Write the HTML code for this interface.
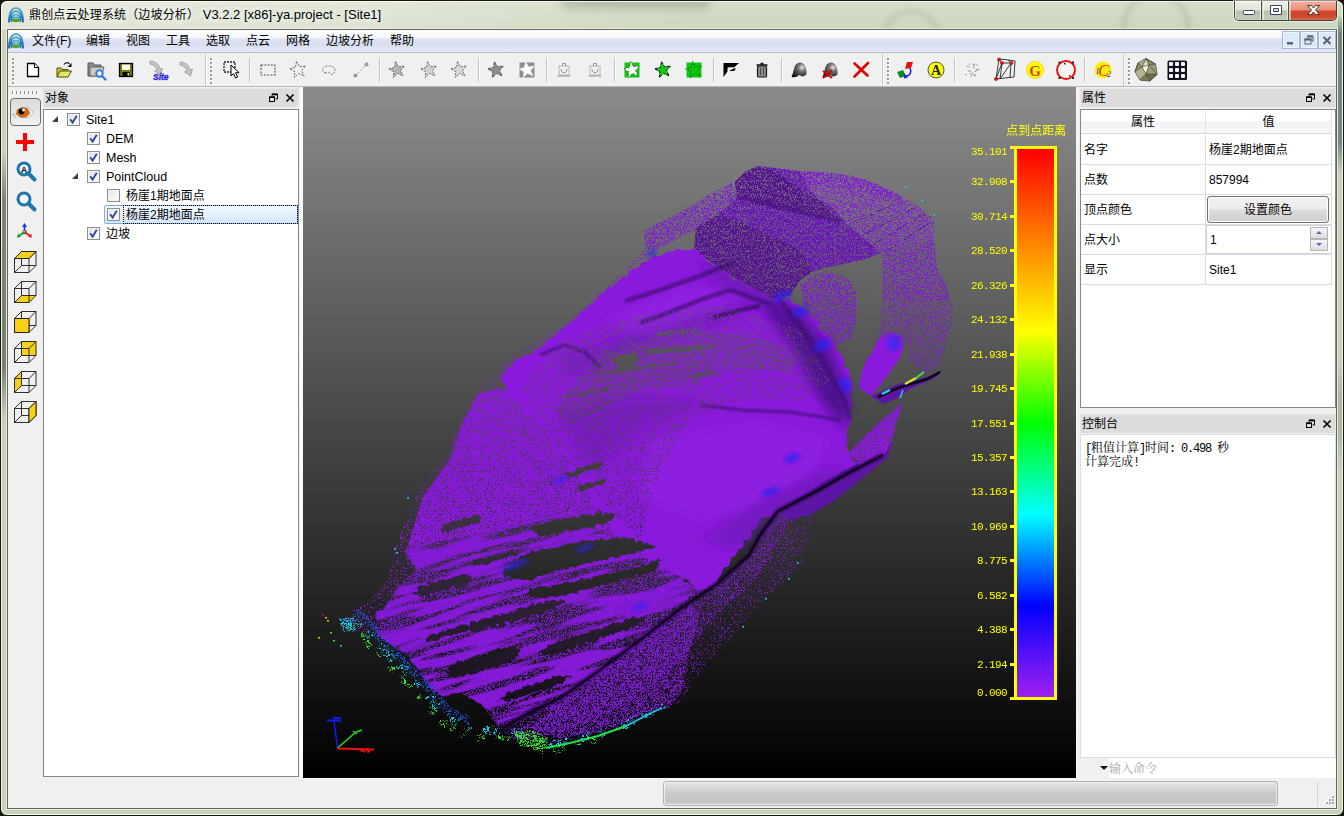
<!DOCTYPE html>
<html lang="zh-CN">
<head>
<meta charset="utf-8">
<title>鼎创点云处理系统（边坡分析） V3.2.2 [x86]-ya.project - [Site1]</title>
<style>
*{box-sizing:border-box;margin:0;padding:0}
html,body{width:1344px;height:816px;overflow:hidden;background:#14150f}
body{font-family:"Liberation Sans","Noto Sans CJK SC",sans-serif;font-size:12px;color:#000;position:relative}
.abs{position:absolute}
#frame{position:absolute;left:0;top:0;width:1344px;height:816px;background:linear-gradient(#d6ddc8 0,#d1dac2 14px,#ccd5bd 30px,#c8d3ba 60px,#c8d3ba 100%);border:1px solid #14150f;border-radius:7px 7px 7px 7px;overflow:hidden}
#frame .hl{position:absolute;left:0;top:0;right:0;bottom:0;border:1px solid rgba(250,253,244,.85);border-radius:6px}
#client{position:absolute;left:7px;top:29px;width:1330px;height:780px;border:1px solid #62665c;background:#f0f0f0;box-shadow:0 0 0 1px rgba(240,243,234,.8)}
#title{position:absolute;left:29px;top:6px;font-size:12px;line-height:17px;white-space:nowrap;color:#000;text-shadow:0 0 6px rgba(255,255,255,.9),0 0 10px rgba(255,255,255,.8),0 0 14px rgba(255,255,255,.6)}
/* menubar */
#menubar{position:absolute;left:8px;top:30px;width:1328px;height:23px;background:linear-gradient(#ffffff 0,#f3f5fb 35%,#dfe3f2 42%,#d9def0 60%,#e3e7f6 100%);border-bottom:1px solid #b6bccc}
#menubar span{position:absolute;top:3px;line-height:16px;font-size:12px;white-space:nowrap}
/* toolbar */
#toolbar{position:absolute;left:8px;top:53px;width:1328px;height:34px;background:#f0f0f0;border-bottom:1px solid #b9b9b9}
.grip{position:absolute;width:3px;background-image:repeating-linear-gradient(#8f8f8f 0 1px,#fff 1px 2px,transparent 2px 4px)}
.vsep{position:absolute;width:1px;background:#c9c9c9;box-shadow:1px 0 0 #fff}
.dtitle{position:absolute;height:19px;background:#dcdcdc;border:1px solid #e6e6e6;border-width:1px 1px 0 1px;font-size:12px;line-height:19px;padding-left:1px;white-space:nowrap}
.box{position:absolute;background:#fff;border:1px solid #828790}

/* left bar */
#leftbar{position:absolute;left:8px;top:87px;width:35px;height:692px;background:#f0f0f0}
.hgrip{position:absolute;height:3px;background-image:repeating-linear-gradient(90deg,#8f8f8f 0 1px,#fff 1px 2px,transparent 2px 4px)}
#eyebtn{position:absolute;left:2px;top:11px;width:31px;height:28px;border:1px solid #6b6b6b;border-radius:4px;background:linear-gradient(#dadada,#f2f2f2)}
/* tree */
.cb{position:absolute;width:13px;height:13px;border:1px solid #8e8f8f;background:linear-gradient(135deg,#d7dbe0 0%,#f4f5f7 55%,#fdfdfd 100%);box-shadow:inset 0 0 0 1px #f4f4f4}
.cb svg{position:absolute;left:1px;top:1px}
.tl{position:absolute;font-size:12px;line-height:17px;white-space:nowrap;margin-top:2px}
.tl.la{font-size:12.5px}
.exp{position:absolute;width:0;height:0;border-left:6px solid transparent;border-bottom:6px solid #404040}
/* right */
.prow{position:absolute;left:0;width:250px;height:30px;border-bottom:1px solid #dcdcdc}
.prow span{position:absolute;top:7px;font-size:12px;line-height:16px;white-space:nowrap}

#vp{position:absolute;left:303px;top:87px;width:773px;height:691px;background:linear-gradient(#8b8b8b,#000);overflow:hidden}
#vpb{position:absolute;left:300px;top:87px;width:777px;height:692px;background:#fbfbfb}
.cl{position:absolute;left:940px;width:67px;text-align:right;color:#ff0;font-family:"Liberation Mono",monospace;font-size:11px;line-height:12px;letter-spacing:-0.6px;white-space:pre}
.tk{position:absolute;left:1010px;width:4px;height:3px;background:#ff0}
.m{letter-spacing:-1.2px}
</style>
</head>
<body>
<div id="frame"><div class="abs" style="left:0;top:0;width:700px;height:29px;background:linear-gradient(90deg,rgba(255,255,255,.38) 0,rgba(255,255,255,.3) 55%,rgba(255,255,255,0) 100%)"></div><div class="abs" style="left:560px;top:-6px;width:150px;height:14px;border-radius:7px;background:rgba(90,100,80,.28);filter:blur(4px)"></div><div class="abs" style="left:880px;top:8px;width:60px;height:60px;border-radius:30px;border:5px solid rgba(120,135,105,.18);filter:blur(2px)"></div><div class="abs" style="left:1120px;top:-10px;width:70px;height:70px;border-radius:35px;border:6px solid rgba(120,135,105,.18);filter:blur(2px)"></div><div class="hl"></div></div>
<div id="title"><span style="letter-spacing:.15px">鼎创点云处理系统（边坡分析）</span><span style="font-size:13px"> V3.2.2 [x86]-ya.project - [Site1]</span></div>
<!--STRIPES--><div class="abs" style="left:2px;top:150px;width:4px;height:270px;background:linear-gradient(rgba(96,108,92,0) 0,rgba(96,108,92,.75) 18%,rgba(96,108,92,.8) 80%,rgba(96,108,92,0) 100%)"></div>
<div class="abs" style="left:1338px;top:14px;width:4px;height:160px;background:linear-gradient(rgba(96,118,116,0) 0,rgba(96,118,116,.85) 12%,rgba(96,118,116,.8) 80%,rgba(96,118,116,0) 100%)"></div>
<div class="abs" style="left:1338px;top:360px;width:4px;height:110px;background:linear-gradient(rgba(96,108,92,0) 0,rgba(96,108,92,.25) 30%,rgba(96,108,92,.25) 70%,rgba(96,108,92,0) 100%)"></div>
<!--/STRIPES--><div id="client"></div>
<div id="menubar">
<span style="left:24px">文件(F)</span><span style="left:78px">编辑</span><span style="left:118px">视图</span><span style="left:158px">工具</span><span style="left:198px">选取</span><span style="left:238px">点云</span><span style="left:278px">网格</span><span style="left:318px">边坡分析</span><span style="left:382px">帮助</span>
</div>
<div id="toolbar"></div><!--TB--><svg class="abs" style="left:8px;top:53px" width="1328" height="34" viewBox="8 53 1328 34"><rect x="205" y="54" width="1" height="32" fill="#c9c9c9"/><rect x="206" y="54" width="1" height="32" fill="#fdfdfd"/><rect x="882" y="54" width="1" height="32" fill="#c9c9c9"/><rect x="883" y="54" width="1" height="32" fill="#fdfdfd"/><rect x="1123" y="54" width="1" height="32" fill="#c9c9c9"/><rect x="1124" y="54" width="1" height="32" fill="#fdfdfd"/><rect x="13" y="59" width="2" height="2" fill="#fff"/><rect x="12" y="58" width="2" height="2" fill="#9a9a9a"/><rect x="13" y="63" width="2" height="2" fill="#fff"/><rect x="12" y="62" width="2" height="2" fill="#9a9a9a"/><rect x="13" y="67" width="2" height="2" fill="#fff"/><rect x="12" y="66" width="2" height="2" fill="#9a9a9a"/><rect x="13" y="71" width="2" height="2" fill="#fff"/><rect x="12" y="70" width="2" height="2" fill="#9a9a9a"/><rect x="13" y="75" width="2" height="2" fill="#fff"/><rect x="12" y="74" width="2" height="2" fill="#9a9a9a"/><rect x="13" y="79" width="2" height="2" fill="#fff"/><rect x="12" y="78" width="2" height="2" fill="#9a9a9a"/><rect x="13" y="83" width="2" height="2" fill="#fff"/><rect x="12" y="82" width="2" height="2" fill="#9a9a9a"/><rect x="211" y="59" width="2" height="2" fill="#fff"/><rect x="210" y="58" width="2" height="2" fill="#9a9a9a"/><rect x="211" y="63" width="2" height="2" fill="#fff"/><rect x="210" y="62" width="2" height="2" fill="#9a9a9a"/><rect x="211" y="67" width="2" height="2" fill="#fff"/><rect x="210" y="66" width="2" height="2" fill="#9a9a9a"/><rect x="211" y="71" width="2" height="2" fill="#fff"/><rect x="210" y="70" width="2" height="2" fill="#9a9a9a"/><rect x="211" y="75" width="2" height="2" fill="#fff"/><rect x="210" y="74" width="2" height="2" fill="#9a9a9a"/><rect x="211" y="79" width="2" height="2" fill="#fff"/><rect x="210" y="78" width="2" height="2" fill="#9a9a9a"/><rect x="211" y="83" width="2" height="2" fill="#fff"/><rect x="210" y="82" width="2" height="2" fill="#9a9a9a"/><rect x="888" y="59" width="2" height="2" fill="#fff"/><rect x="887" y="58" width="2" height="2" fill="#9a9a9a"/><rect x="888" y="63" width="2" height="2" fill="#fff"/><rect x="887" y="62" width="2" height="2" fill="#9a9a9a"/><rect x="888" y="67" width="2" height="2" fill="#fff"/><rect x="887" y="66" width="2" height="2" fill="#9a9a9a"/><rect x="888" y="71" width="2" height="2" fill="#fff"/><rect x="887" y="70" width="2" height="2" fill="#9a9a9a"/><rect x="888" y="75" width="2" height="2" fill="#fff"/><rect x="887" y="74" width="2" height="2" fill="#9a9a9a"/><rect x="888" y="79" width="2" height="2" fill="#fff"/><rect x="887" y="78" width="2" height="2" fill="#9a9a9a"/><rect x="888" y="83" width="2" height="2" fill="#fff"/><rect x="887" y="82" width="2" height="2" fill="#9a9a9a"/><rect x="1129" y="59" width="2" height="2" fill="#fff"/><rect x="1128" y="58" width="2" height="2" fill="#9a9a9a"/><rect x="1129" y="63" width="2" height="2" fill="#fff"/><rect x="1128" y="62" width="2" height="2" fill="#9a9a9a"/><rect x="1129" y="67" width="2" height="2" fill="#fff"/><rect x="1128" y="66" width="2" height="2" fill="#9a9a9a"/><rect x="1129" y="71" width="2" height="2" fill="#fff"/><rect x="1128" y="70" width="2" height="2" fill="#9a9a9a"/><rect x="1129" y="75" width="2" height="2" fill="#fff"/><rect x="1128" y="74" width="2" height="2" fill="#9a9a9a"/><rect x="1129" y="79" width="2" height="2" fill="#fff"/><rect x="1128" y="78" width="2" height="2" fill="#9a9a9a"/><rect x="1129" y="83" width="2" height="2" fill="#fff"/><rect x="1128" y="82" width="2" height="2" fill="#9a9a9a"/><rect x="249" y="58" width="1" height="24" fill="#c4c4c4"/><rect x="250" y="58" width="1" height="24" fill="#fbfbfb"/><rect x="379" y="58" width="1" height="24" fill="#c4c4c4"/><rect x="380" y="58" width="1" height="24" fill="#fbfbfb"/><rect x="478" y="58" width="1" height="24" fill="#c4c4c4"/><rect x="479" y="58" width="1" height="24" fill="#fbfbfb"/><rect x="546" y="58" width="1" height="24" fill="#c4c4c4"/><rect x="547" y="58" width="1" height="24" fill="#fbfbfb"/><rect x="614" y="58" width="1" height="24" fill="#c4c4c4"/><rect x="615" y="58" width="1" height="24" fill="#fbfbfb"/><rect x="713" y="58" width="1" height="24" fill="#c4c4c4"/><rect x="714" y="58" width="1" height="24" fill="#fbfbfb"/><rect x="781" y="58" width="1" height="24" fill="#c4c4c4"/><rect x="782" y="58" width="1" height="24" fill="#fbfbfb"/><rect x="954" y="58" width="1" height="24" fill="#c4c4c4"/><rect x="955" y="58" width="1" height="24" fill="#fbfbfb"/><rect x="1084" y="58" width="1" height="24" fill="#c4c4c4"/><rect x="1085" y="58" width="1" height="24" fill="#fbfbfb"/><g transform="translate(33 70)"><path d="M-5.5 -6.5h7l4 4v9h-11z" fill="#fff" stroke="#000" stroke-width="1.3"/><path d="M1.5 -6.5v4h4" fill="#fff" stroke="#000" stroke-width="1"/></g><g transform="translate(64 70)"><path d="M-7 7v-9h4l1 1.5h6v2" fill="#caca4a" stroke="#4d4d00" stroke-width="1"/><path d="M-7 7l3-6h11.5l-3.5 6z" fill="#e6e66a" stroke="#4d4d00" stroke-width="1"/><path d="M0 -5.5c1.5-2 4-2.5 5.5-0.5" fill="none" stroke="#000" stroke-width="1.2"/><path d="M7.5 -7v4h-4z" fill="#000"/></g><g transform="translate(96 70)"><path d="M-8 6v-13h5l1.5 2h6.5v11z" fill="#8a8a8a" stroke="#555" stroke-width="1"/><path d="M-6 6v-9h12l2 0l-2.5 9z" fill="#c9c9c9" stroke="#666" stroke-width="1"/><circle cx="3.5" cy="3.5" r="3.2" fill="#fff" stroke="#2f7de1" stroke-width="2"/><path d="M6 6l3.5 3.5" stroke="#2f7de1" stroke-width="2.4" stroke-linecap="round"/></g><g transform="translate(126 70)"><rect x="-6.5" y="-6.5" width="13" height="13" fill="#77770a" stroke="#000" stroke-width="1.3"/><rect x="-4" y="-5.5" width="8" height="5.5" fill="#f4f4f4"/><rect x="-3.5" y="2" width="7" height="4.5" fill="#000"/><rect x="1.5" y="3" width="1.5" height="2.5" fill="#ddd"/></g><g transform="translate(157 70)"><g transform="translate(0 -1)"><path d="M-7 -8c5 0 9 3 10 8l2.5-1l-2 7l-6-4l2.5-1c-1-3-3-5-7-6z" fill="#c4c4c4" stroke="#9a9a9a" stroke-width=".8"/></g><text x="-4" y="10" font-family="Liberation Sans,sans-serif" font-size="8.5" font-weight="bold" font-style="italic" fill="#2a1fd6" stroke="#2a1fd6" stroke-width=".4">Site</text></g><g transform="translate(187 70)"><path d="M-7 -8c5 0 9 3 10 8l2.5-1l-2 7l-6-4l2.5-1c-1-3-3-5-7-6z" fill="#c4c4c4" stroke="#9a9a9a" stroke-width=".8"/></g><g transform="translate(231 70)"><rect x="-7" y="-8" width="11" height="10" fill="none" stroke="#222" stroke-width="1.3" stroke-dasharray="2 1"/><path d="M0 -5v11l2.6-2.5l2 4.5l2-1l-2-4.3h3.5z" fill="#fff" stroke="#000" stroke-width="1"/></g><g transform="translate(268 70)"><rect x="-7" y="-5" width="14" height="10" fill="none" stroke="#555" stroke-width="1.1" stroke-dasharray="2 1.3"/></g><g transform="translate(298 70)"><polygon points="-1.5,-8.4 1.6,-3.2 7.5,-4.0 3.6,0.5 6.1,5.9 0.6,3.5 -3.7,7.6 -3.2,1.7 -8.4,-1.2 -2.6,-2.5" fill="none" stroke="#666" stroke-width="1" stroke-dasharray="2 1.2"/></g><g transform="translate(329 70)"><path d="M-3 3c-4-0.5-5-5-1-6.5c4-1.5 10 0 10 3.5c0 3-2 4.5-4 4.5c-1-2.5-3-2.5-5-1.5z" fill="none" stroke="#777" stroke-width="1" stroke-dasharray="2 1.3"/></g><g transform="translate(361 70)"><path d="M-5.5 5.5L5.5-5.5" stroke="#999" stroke-width="1" stroke-dasharray="2 1.5"/><circle cx="-5.5" cy="5.5" r="2" fill="#999"/><circle cx="5.5" cy="-5.5" r="2" fill="#999"/></g><g transform="translate(397 70)"><polygon points="-1.5,-8.4 1.6,-3.2 7.5,-4.0 3.6,0.5 6.1,5.9 0.6,3.5 -3.7,7.6 -3.2,1.7 -8.4,-1.2 -2.6,-2.5" fill="#b4b4b4" stroke="#6e6e6e" stroke-width="1" stroke-dasharray="2 1.2"/></g><g transform="translate(429 70)"><polygon points="-1.5,-8.4 1.6,-3.2 7.5,-4.0 3.6,0.5 6.1,5.9 0.6,3.5 -3.7,7.6 -3.2,1.7 -8.4,-1.2 -2.6,-2.5" fill="#d2d2d2" stroke="#6e6e6e" stroke-width="1" stroke-dasharray="2 1.2"/></g><g transform="translate(459 70)"><polygon points="-1.5,-8.4 1.6,-3.2 7.5,-4.0 3.6,0.5 6.1,5.9 0.6,3.5 -3.7,7.6 -3.2,1.7 -8.4,-1.2 -2.6,-2.5" fill="#d6d6d6" stroke="#6e6e6e" stroke-width="1" stroke-dasharray="2 1.2"/></g><g transform="translate(496 70)"><polygon points="-1.5,-8.4 1.6,-3.2 7.5,-4.0 3.6,0.5 6.1,5.9 0.6,3.5 -3.7,7.6 -3.2,1.7 -8.4,-1.2 -2.6,-2.5" fill="#8d8d8d" stroke="#5c5c5c" stroke-width="1" stroke-dasharray="3 1"/></g><g transform="translate(527 70)"><rect x="-7.5" y="-7.5" width="15" height="15" fill="#8d8d8d"/><polygon points="-1.5,-8.5 1.6,-3.2 7.6,-4.0 3.6,0.5 6.2,6.0 0.6,3.5 -3.8,7.7 -3.2,1.7 -8.5,-1.2 -2.6,-2.5" fill="#fff" stroke="#ddd" stroke-width=".6"/></g><g transform="translate(564 70)"><g fill="none" stroke="#8a8a8a" stroke-width=".9"><rect x="-5" y="-4" width="10" height="9" stroke-dasharray="1.5 1"/><path d="M-6.5 6h13M-1.5 -4v-2.5h3v2.5M-3 -1c0 5 6 5 6 0"/></g></g><g transform="translate(595 70)"><g fill="none" stroke="#8a8a8a" stroke-width=".9"><rect x="-5" y="-4" width="10" height="9" stroke-dasharray="1.5 1"/><path d="M-6.5 6h13M-1.5 -4v-2.5h3v2.5M-3 -1c0 5 6 5 6 0"/></g></g><g transform="translate(632 70)"><rect x="-7.5" y="-7.5" width="15" height="15" fill="#0fc60f"/><polygon points="-1.5,-8.5 1.6,-3.2 7.6,-4.0 3.6,0.5 6.2,6.0 0.6,3.5 -3.8,7.7 -3.2,1.7 -8.5,-1.2 -2.6,-2.5" fill="#fff" stroke="#333" stroke-width=".7" stroke-dasharray="2 1.5"/></g><g transform="translate(663 70)"><polygon points="-1.5,-8.4 1.6,-3.2 7.5,-4.0 3.6,0.5 6.1,5.9 0.6,3.5 -3.7,7.6 -3.2,1.7 -8.4,-1.2 -2.6,-2.5" fill="#14c814" stroke="#111" stroke-width="1" stroke-dasharray="3 1"/></g><g transform="translate(694 70)"><rect x="-7.5" y="-7.5" width="15" height="15" fill="#0fc60f"/><polygon points="-1.5,-8.5 1.6,-3.2 7.6,-4.0 3.6,0.5 6.2,6.0 0.6,3.5 -3.8,7.7 -3.2,1.7 -8.5,-1.2 -2.6,-2.5" fill="none" stroke="#0a4d0a" stroke-width=".9" stroke-dasharray="1.5 1.5"/></g><g transform="translate(731 70)"><path d="M-7.5 -7h15.5l-5 4.5h-6.5v4l-4 5.5z" fill="#000"/><path d="M-1 -1.5h6l-2 2.5h-4z" fill="#000"/><path d="M-2.5 -2.5h5.5l-2.5 2.5h-3z" fill="#f0f0f0"/></g><g transform="translate(762 70)"><rect x="-4.5" y="-4" width="9" height="11" rx="1" fill="#8c8c8c" stroke="#1a1a1a" stroke-width="1.2"/><path d="M-5.5 -5h11M-1.5 -6.5h3" stroke="#1a1a1a" stroke-width="1.4"/><path d="M-1.5 -2v7M1.5 -2v7" stroke="#4a4a4a" stroke-width="1"/></g><defs><radialGradient id="sg" cx=".7" cy=".35" r=".8"><stop offset="0" stop-color="#e6e6e6"/><stop offset=".35" stop-color="#6e6e6e"/><stop offset="1" stop-color="#0c0c0c"/></radialGradient></defs><g transform="translate(799 70)"><path d="M-7.5 7c2-4 2-9 4-12c2-3.5 7-3.5 9 0c2 3.5 2 7 2 9.5c-3 2.5-5 2.5-7 0.5c-2.5 2-5 2.5-8 2z" fill="url(#sg)"/></g><g transform="translate(830 70)"><path d="M-7.5 7c2-4 2-9 4-12c2-3.5 7-3.5 9 0c2 3.5 2 7 2 9.5c-3 2.5-5 2.5-7 0.5c-2.5 2-5 2.5-8 2z" fill="url(#sg)"/><path d="M-7 1l9 7M2 0l-9 8" stroke="#d80000" stroke-width="2"/></g><g transform="translate(861 70)"><path d="M-6.5 -6.5l13 12M7 -7l-13.5 13.5" stroke="#e00000" stroke-width="2.6" stroke-linecap="round"/></g><g transform="translate(905 70)"><path d="M2 -8l6 0l-2 6l-6 1z" fill="#ea1010"/><path d="M-8 2l6-2l3 6l-6 2z" fill="#0a8a2a"/><path d="M5 -2c2 4 0 8-4 8" fill="none" stroke="#1020ee" stroke-width="1.6"/><path d="M-1 3.5l0 5l4-1z" fill="#1020ee"/></g><g transform="translate(936 70)"><circle r="8" fill="#ffff00" stroke="#555" stroke-width="1"/><text x="0" y="5" text-anchor="middle" font-family="Liberation Serif,serif" font-weight="bold" font-size="14" fill="#222">A</text></g><g transform="translate(972 70)"><g fill="#9a9a9a"><rect x="-3.9" y="0.1" width="1.3" height="1.3"/><rect x="-2.2" y="0.9" width="1.3" height="1.3"/><rect x="1.1" y="-6.1" width="1.3" height="1.3"/><rect x="-6.8" y="3.9" width="1.3" height="1.3"/><rect x="-3.6" y="-4.0" width="1.3" height="1.3"/><rect x="5.9" y="-0.9" width="1.3" height="1.3"/><rect x="3.9" y="-0.8" width="1.3" height="1.3"/><rect x="1.3" y="-5.0" width="1.3" height="1.3"/><rect x="1.3" y="4.3" width="1.3" height="1.3"/><rect x="-0.2" y="2.6" width="1.3" height="1.3"/><rect x="1.7" y="-6.2" width="1.3" height="1.3"/><rect x="2.9" y="0.7" width="1.3" height="1.3"/><rect x="-3.1" y="-6.6" width="1.3" height="1.3"/><rect x="4.3" y="-0.9" width="1.3" height="1.3"/><rect x="2.3" y="4.4" width="1.3" height="1.3"/><rect x="2.3" y="5.0" width="1.3" height="1.3"/><rect x="-1.9" y="3.4" width="1.3" height="1.3"/><rect x="-1.2" y="5.2" width="1.3" height="1.3"/><rect x="4.4" y="-5.7" width="1.3" height="1.3"/><rect x="-5.2" y="-4.2" width="1.3" height="1.3"/><rect x="5.6" y="-1.3" width="1.3" height="1.3"/><rect x="1.1" y="-3.1" width="1.3" height="1.3"/></g></g><g transform="translate(1004 70)"><g fill="none" stroke="#222" stroke-width=".9"><path d="M-8 9l3-20l9.5 1l6.5 1l-1 16z"/><path d="M-5-11l3 4l9.5 0M-2-7l-2 16l11-16l-1 15M4-10l3 3M-8 9l6-16"/></g><g fill="#ee1010" stroke="#800" stroke-width=".5"><circle cx="-5" cy="-10.5" r="1.6"/><circle cx="-2" cy="-7" r="1.6"/><circle cx="7.5" cy="-7" r="1.6"/><circle cx="-8" cy="9" r="1.6"/></g></g><g transform="translate(1035 70)"><circle r="8.5" fill="#ffff00" stroke="#e8d000" stroke-width=".8"/><text x="0" y="5.5" text-anchor="middle" font-family="Liberation Serif,serif" font-weight="bold" font-size="15" fill="#e03a10">G</text></g><g transform="translate(1066 70)"><circle r="9" fill="#f4f4f4" stroke="#ee1111" stroke-width="2"/><g fill="#222"><rect x="-7.5" y="-8.5" width="2" height="2"/><rect x="6" y="-8.5" width="2" height="2"/><rect x="-7.5" y="7" width="2" height="2"/><rect x="6" y="7" width="2" height="2"/><rect x="-2" y="-7" width="1.5" height="1.5"/><rect x="3" y="5" width="1.5" height="1.5"/></g></g><g transform="translate(1103 70)"><circle r="8.5" fill="#ffee00"/><text x="0.5" y="5.5" text-anchor="middle" font-family="Liberation Serif,serif" font-style="italic" font-size="16" fill="#e03a10">C</text><text x="-7.5" y="4" font-family="Liberation Serif,serif" font-style="italic" font-size="8" fill="#2a2ad0">1</text><text x="4" y="7" font-family="Liberation Serif,serif" font-style="italic" font-size="8" fill="#2a2ad0">2</text></g><g transform="translate(1146 70)"><polygon points="0,-11.5 9.5,-6 11,4.5 4,11 -6,10 -11,1.5 -8,-7" fill="#8c8c68" stroke="#3c3c2a" stroke-width="1"/><polygon points="0,-11.5 -8,-7 -4,-3" fill="#a8a884"/><polygon points="-4,-3 3,-5 0,4" fill="#fff"/><polygon points="0,-11.5 3,-5 -4,-3" fill="#d8d8c0"/><polygon points="3,-5 9.5,-6 11,4.5 0,4" fill="#9c9c78"/><polygon points="0,4 11,4.5 4,11" fill="#6c6c4c"/><polygon points="0,4 4,11 -6,10" fill="#7c7c5c"/><polygon points="-4,-3 0,4 -6,10 -11,1.5" fill="#b4b490"/><g fill="none" stroke="#3c3c2a" stroke-width=".6"><path d="M0-11.5L3-5L9.5-6M3-5L11 4.5M3-5L0 4L-4-3L3-5M-4-3L-8-7M-4-3L-11 1.5M0 4L-6 10M0 4L4 11M0 4L11 4.5M-4-3L0-11.5"/></g></g><g transform="translate(1177 70)"><rect x="-9.5" y="-9.5" width="19.5" height="19.5" rx="1.5" fill="#12121e"/><rect x="-8" y="-8" width="4" height="4" rx="1" fill="#f4f4fa"/><rect x="-8" y="-2" width="4" height="4" rx="1" fill="#f4f4fa"/><rect x="-8" y="4" width="4" height="4" rx="1" fill="#f4f4fa"/><rect x="-2" y="-8" width="4" height="4" rx="1" fill="#f4f4fa"/><rect x="-2" y="-2" width="4" height="4" rx="1" fill="#f4f4fa"/><rect x="-2" y="4" width="4" height="4" rx="1" fill="#f4f4fa"/><rect x="4" y="-8" width="4" height="4" rx="1" fill="#f4f4fa"/><rect x="4" y="-2" width="4" height="4" rx="1" fill="#f4f4fa"/><rect x="4" y="4" width="4" height="4" rx="1" fill="#f4f4fa"/></g></svg><!--/TB-->
<div id="leftbar">
<div class="hgrip" style="left:4px;top:4px;width:27px"></div>
<div id="eyebtn"></div>
</div>

<!--LI--><svg class="abs" style="left:8px;top:87px" width="35" height="400" viewBox="8 87 35 400"><g transform="translate(25 112)"><path d="M-9 1c3-5 9-7 14-4c2 1 3 3 3 4c-2 4-8 6-13 4c-2-1-3-2-4-4z" fill="#f4f4f4" stroke="#999" stroke-width=".6"/><ellipse cx="-2" cy="0.5" rx="6.5" ry="5" fill="#e0640c"/><ellipse cx="-2" cy="0.5" rx="6.5" ry="5" fill="none" stroke="#2e7d1e" stroke-width=".7" stroke-dasharray="2 3"/><circle cx="-3.5" cy="-0.5" r="3" fill="#000"/><circle cx="-1.5" cy="-2" r="1.5" fill="#fff"/><path d="M-10 2l-3 0.5M-9 4l-2 1.5" stroke="#666" stroke-width=".5"/></g><g transform="translate(25 142)"><rect x="-9" y="-2" width="18" height="4" fill="#ff0000"/><rect x="-2" y="-9" width="4" height="18" fill="#ff0000"/></g><g transform="translate(25 171)"><circle cx="-1" cy="-2" r="6" fill="#f4f8fb" stroke="#1f75ad" stroke-width="3"/><path d="M3.5 2.5l6 6" stroke="#1f75ad" stroke-width="4" stroke-linecap="round"/><text x="-1" y="1.5" text-anchor="middle" font-family="Liberation Sans,sans-serif" font-weight="bold" font-size="9" fill="#111">A</text></g><g transform="translate(25 201)"><circle cx="-1" cy="-2" r="6" fill="#f4f8fb" stroke="#1f75ad" stroke-width="3"/><path d="M3.5 2.5l6 6" stroke="#1f75ad" stroke-width="4" stroke-linecap="round"/></g><g transform="translate(24.5 232)"><path d="M0 0v-6" stroke="#1030ff" stroke-width="1.6"/><path d="M-2.5 -5l2.5-4l2.5 4z" fill="#1030ff"/><path d="M0 0l-5 3.5" stroke="#0a9a2a" stroke-width="1.6"/><path d="M-7.5 5.5l1-4l3 3.5z" fill="#0a9a2a"/><path d="M0 0l5 3.5" stroke="#ee1010" stroke-width="1.6"/><path d="M7.5 5.5l-1-4l-3 3.5z" fill="#ee1010"/><circle r="2.2" fill="#555"/><circle cx="-.5" cy="-.5" r="1" fill="#e8d820"/></g><g transform="translate(14.5 251)"><g fill="none" stroke="#1a1a1a" stroke-width=".9"><polygon points="0,7.5 14.5,7.5 14.5,21.5 0,21.5"/><polygon points="7,0.5 21.5,0.5 21.5,14.5 7,14.5"/><path d="M0 7.5L7 0.5"/><path d="M14.5 7.5L21.5 0.5"/><path d="M14.5 21.5L21.5 14.5"/><path d="M0 21.5L7 14.5"/></g><polygon points="0,7.5 7,0.5 21.5,0.5 14.5,7.5" fill="#f7d117"/><polygon points="0,7.5 7,0.5 21.5,0.5 14.5,7.5" fill="none" stroke="#1a1a1a" stroke-width=".9"/></g><g transform="translate(14.5 281)"><polygon points="0,21.5 7,14.5 21.5,14.5 14.5,21.5" fill="#f7d117"/><g fill="none" stroke="#1a1a1a" stroke-width=".9"><polygon points="0,7.5 14.5,7.5 14.5,21.5 0,21.5"/><polygon points="7,0.5 21.5,0.5 21.5,14.5 7,14.5"/><path d="M0 7.5L7 0.5"/><path d="M14.5 7.5L21.5 0.5"/><path d="M14.5 21.5L21.5 14.5"/><path d="M0 21.5L7 14.5"/></g></g><g transform="translate(14.5 311)"><g fill="none" stroke="#1a1a1a" stroke-width=".9"><polygon points="0,7.5 14.5,7.5 14.5,21.5 0,21.5"/><polygon points="7,0.5 21.5,0.5 21.5,14.5 7,14.5"/><path d="M0 7.5L7 0.5"/><path d="M14.5 7.5L21.5 0.5"/><path d="M14.5 21.5L21.5 14.5"/><path d="M0 21.5L7 14.5"/></g><polygon points="0,7.5 14.5,7.5 14.5,21.5 0,21.5" fill="#f7d117"/><polygon points="0,7.5 14.5,7.5 14.5,21.5 0,21.5" fill="none" stroke="#1a1a1a" stroke-width=".9"/></g><g transform="translate(14.5 341)"><polygon points="7,0.5 21.5,0.5 21.5,14.5 7,14.5" fill="#f7d117"/><g fill="none" stroke="#1a1a1a" stroke-width=".9"><polygon points="0,7.5 14.5,7.5 14.5,21.5 0,21.5"/><polygon points="7,0.5 21.5,0.5 21.5,14.5 7,14.5"/><path d="M0 7.5L7 0.5"/><path d="M14.5 7.5L21.5 0.5"/><path d="M14.5 21.5L21.5 14.5"/><path d="M0 21.5L7 14.5"/></g></g><g transform="translate(14.5 371)"><polygon points="0,7.5 7,0.5 7,14.5 0,21.5" fill="#f7d117"/><g fill="none" stroke="#1a1a1a" stroke-width=".9"><polygon points="0,7.5 14.5,7.5 14.5,21.5 0,21.5"/><polygon points="7,0.5 21.5,0.5 21.5,14.5 7,14.5"/><path d="M0 7.5L7 0.5"/><path d="M14.5 7.5L21.5 0.5"/><path d="M14.5 21.5L21.5 14.5"/><path d="M0 21.5L7 14.5"/></g></g><g transform="translate(14.5 401)"><g fill="none" stroke="#1a1a1a" stroke-width=".9"><polygon points="0,7.5 14.5,7.5 14.5,21.5 0,21.5"/><polygon points="7,0.5 21.5,0.5 21.5,14.5 7,14.5"/><path d="M0 7.5L7 0.5"/><path d="M14.5 7.5L21.5 0.5"/><path d="M14.5 21.5L21.5 14.5"/><path d="M0 21.5L7 14.5"/></g><polygon points="14.5,7.5 21.5,0.5 21.5,14.5 14.5,21.5" fill="#f7d117"/><polygon points="14.5,7.5 21.5,0.5 21.5,14.5 14.5,21.5" fill="none" stroke="#1a1a1a" stroke-width=".9"/></g></svg><!--/LI-->
<div class="dtitle" style="left:43px;top:88px;width:256px">对象</div>
<div class="box" style="left:43px;top:109px;width:256px;height:668px"></div>
<div id="tree" class="abs" style="left:0;top:0">
<div class="abs" style="left:104px;top:205px;width:194px;height:19px;border:1px solid #84acdd;border-radius:2px;background:linear-gradient(#f2f8ff,#d4e6fb)"></div>
<div class="abs" style="left:123px;top:205px;width:175px;height:19px;border:1px dotted #000"></div>
<div class="exp" style="left:52px;top:116px"></div>
<div class="exp" style="left:72px;top:173px"></div>
<div class="cb" style="left:67px;top:113px"><svg width="9" height="9" viewBox="0 0 9 9"><path d="M1.2 4.2 L3.6 7.6 L7.8 0.8" fill="none" stroke="#31479e" stroke-width="1.9"/></svg></div><div class="tl la" style="left:86px;top:110px">Site1</div>
<div class="cb" style="left:87px;top:132px"><svg width="9" height="9" viewBox="0 0 9 9"><path d="M1.2 4.2 L3.6 7.6 L7.8 0.8" fill="none" stroke="#31479e" stroke-width="1.9"/></svg></div><div class="tl la" style="left:106px;top:129px">DEM</div>
<div class="cb" style="left:87px;top:151px"><svg width="9" height="9" viewBox="0 0 9 9"><path d="M1.2 4.2 L3.6 7.6 L7.8 0.8" fill="none" stroke="#31479e" stroke-width="1.9"/></svg></div><div class="tl la" style="left:106px;top:148px">Mesh</div>
<div class="cb" style="left:87px;top:170px"><svg width="9" height="9" viewBox="0 0 9 9"><path d="M1.2 4.2 L3.6 7.6 L7.8 0.8" fill="none" stroke="#31479e" stroke-width="1.9"/></svg></div><div class="tl la" style="left:106px;top:167px">PointCloud</div>
<div class="cb" style="left:107px;top:189px"></div><div class="tl" style="left:126px;top:186px">杨崖1期地面点</div>
<div class="cb" style="left:107px;top:208px"><svg width="9" height="9" viewBox="0 0 9 9"><path d="M1.2 4.2 L3.6 7.6 L7.8 0.8" fill="none" stroke="#31479e" stroke-width="1.9"/></svg></div><div class="tl" style="left:126px;top:205px">杨崖2期地面点</div>
<div class="cb" style="left:87px;top:227px"><svg width="9" height="9" viewBox="0 0 9 9"><path d="M1.2 4.2 L3.6 7.6 L7.8 0.8" fill="none" stroke="#31479e" stroke-width="1.9"/></svg></div><div class="tl" style="left:106px;top:224px">边坡</div>
</div>

<div id="vpb"></div>
<div id="vp">
<svg id="cloud" class="abs" style="left:0;top:0" width="773" height="691" viewBox="303 87 773 691">
<!--CLOUD-->
<defs>
<linearGradient id="bgg" gradientUnits="userSpaceOnUse" x1="0" y1="87" x2="0" y2="778"><stop offset="0" stop-color="#8b8b8b"/><stop offset="1" stop-color="#000"/></linearGradient>
<filter id="fRough" filterUnits="userSpaceOnUse" x="300" y="80" width="780" height="700" color-interpolation-filters="sRGB"><feTurbulence type="fractalNoise" baseFrequency="0.12" numOctaves="2" seed="3" result="n"/><feDisplacementMap in="SourceGraphic" in2="n" scale="9" xChannelSelector="R" yChannelSelector="G"/></filter>
<filter id="fRough2" filterUnits="userSpaceOnUse" x="300" y="80" width="780" height="700" color-interpolation-filters="sRGB"><feTurbulence type="fractalNoise" baseFrequency="0.2" numOctaves="2" seed="9" result="n"/><feDisplacementMap in="SourceGraphic" in2="n" scale="7" xChannelSelector="R" yChannelSelector="G"/></filter>
<filter id="fBlur" filterUnits="userSpaceOnUse" x="300" y="80" width="780" height="700"><feGaussianBlur stdDeviation="5"/></filter>
<filter id="fBlur1" filterUnits="userSpaceOnUse" x="300" y="80" width="780" height="700"><feGaussianBlur stdDeviation="0.9"/></filter>
<filter id="fBlur2" filterUnits="userSpaceOnUse" x="300" y="80" width="780" height="700"><feGaussianBlur stdDeviation="2"/></filter>
<filter id="fU" filterUnits="userSpaceOnUse" x="300" y="80" width="780" height="700" color-interpolation-filters="sRGB"><feTurbulence type="fractalNoise" baseFrequency="1.7" numOctaves="1" seed="11" result="n"/><feColorMatrix in="n" type="matrix" values="0 0 0 0 0  0 0 0 0 0  0 0 0 0 0  10 0 0 0 -3.95" result="m"/><feComposite in="SourceGraphic" in2="m" operator="in"/></filter>
<filter id="fS" filterUnits="userSpaceOnUse" x="300" y="80" width="780" height="700" color-interpolation-filters="sRGB"><feTurbulence type="fractalNoise" baseFrequency="1.7" numOctaves="1" seed="12" result="n"/><feColorMatrix in="n" type="matrix" values="0 0 0 0 0  0 0 0 0 0  0 0 0 0 0  10 0 0 0 -4.65" result="m"/><feComposite in="SourceGraphic" in2="m" operator="in"/></filter>
<filter id="fL" filterUnits="userSpaceOnUse" x="300" y="80" width="780" height="700" color-interpolation-filters="sRGB"><feTurbulence type="fractalNoise" baseFrequency="1.7" numOctaves="1" seed="13" result="n"/><feColorMatrix in="n" type="matrix" values="0 0 0 0 0  0 0 0 0 0  0 0 0 0 0  10 0 0 0 -5.15" result="m"/><feComposite in="SourceGraphic" in2="m" operator="in"/></filter>
<filter id="fF" filterUnits="userSpaceOnUse" x="300" y="80" width="780" height="700" color-interpolation-filters="sRGB"><feTurbulence type="fractalNoise" baseFrequency="1.7" numOctaves="1" seed="14" result="n"/><feColorMatrix in="n" type="matrix" values="0 0 0 0 0  0 0 0 0 0  0 0 0 0 0  10 0 0 0 -5.8" result="m"/><feComposite in="SourceGraphic" in2="m" operator="in"/></filter>
<filter id="fH" filterUnits="userSpaceOnUse" x="300" y="80" width="780" height="700" color-interpolation-filters="sRGB"><feTurbulence type="fractalNoise" baseFrequency="1.3" numOctaves="1" seed="15" result="n"/><feColorMatrix in="n" type="matrix" values="0 0 0 0 0  0 0 0 0 0  0 0 0 0 0  10 0 0 0 -3.4" result="m"/><feComposite in="SourceGraphic" in2="m" operator="in"/></filter>
<filter id="fT" filterUnits="userSpaceOnUse" x="-200" y="200" width="1400" height="900" color-interpolation-filters="sRGB"><feTurbulence type="fractalNoise" baseFrequency="0.012 0.13" numOctaves="2" seed="21" result="n"/><feColorMatrix in="n" type="matrix" values="0 0 0 0 0  0 0 0 0 0  0 0 0 0 0  10 0 0 0 -4.2" result="m"/><feComposite in="SourceGraphic" in2="m" operator="in"/></filter>
</defs>
<polygon fill="#8a1adb" filter="url(#fF)" points="655,236 640,254 620,274 598,294 575,314 552,332 528,346 505,362 486,382 468,406 455,433 444,458 428,478 414,498 403,525 394,552 388,580 370,600 350,612 340,622 350,632 375,632 377,613 398,587 417,569 408,552 420,523 427,501 442,481 457,462 464,440 469,426 484,399 504,377 523,362 548,350 567,333 587,318 611,296 631,279 650,263"/>
<polygon fill="#7d1cd0" filter="url(#fS)" points="644,231 660,222 680,212 700,200 718,190 733,182 737,196 718,214 705,222 693,231 675,240 660,248 652,253 645,245"/>
<g filter="url(#fU)"><polygon fill="#6a18b6" points="696,228 705,222 718,214 737,197 735,182 745,172 757,166 800,171 808,188 832,213 860,235 881,253 869,258 849,263 824,268 812,272 800,280 790,295 772,299 750,287 730,275 710,262 694,250"/><polygon fill="#451074" points="737,197 735,182 745,172 757,166 775,170 800,190 830,205 845,222 800,214 760,205" opacity=".75"/><polygon fill="#4a1180" points="696,228 718,214 740,222 800,250 812,272 800,280 790,295 772,299 730,275 694,250" opacity=".8"/></g>
<polygon fill="#6a18b6" opacity=".2" points="696,228 705,222 718,214 737,197 735,182 745,172 757,166 800,171 808,188 832,213 860,235 881,253 869,258 849,263 824,268 812,272 800,280 790,295 772,299 750,287 730,275 710,262 694,250"/>
<polygon fill="#8420d6" filter="url(#fS)" points="800,171 837,173 864,179 883,187 898,194 915,204 934,219 934,240 920,245 900,250 881,253 860,235 832,213 808,188"/>
<polygon fill="#7a1cc8" filter="url(#fL)" points="800,171 837,173 864,179 883,187 898,194 905,205 870,195 835,188 805,184"/>
<g stroke="#4a1180" stroke-width="1.2" opacity=".7" filter="url(#fS)"><path d="M931 222L885 252M925 214L870 246M915 207L858 238M903 199L845 228"/></g>
<polygon fill="#7d1cd0" filter="url(#fS)" points="881,253 934,240 937,268 947,287 950,300 882,300 883,272"/>
<polygon fill="#7d1cd0" filter="url(#fL)" points="882,300 950,300 954,307 952,322 945,345 940,365 925,375 910,360 905,340 890,335 873,350 881,322"/>
<polygon fill="#7d1cd0" filter="url(#fS)" points="812,275 830,270 850,278 858,290 856,322 850,340 835,345 820,325 805,310 800,285"/>
<polygon fill="#7a1bcc" filter="url(#fF)" points="778,511 812,514 812,533 802,562 788,580 766,597 741,626 725,645 705,665 690,688 680,705 651,713 626,726 598,736 570,743 546,748 514,741 500,730 523,716 558,699 593,678 630,653 663,620 698,590 717,584 749,555"/>
<polygon fill="#7a1bcc" filter="url(#fL)" points="778,511 790,520 770,560 745,590 715,615 690,650 660,680 625,705 590,722 550,735 514,738 500,730 523,716 558,699 593,678 630,653 663,620 698,590 717,584 749,555"/>
<polygon fill="#7a1bcc" filter="url(#fS)" points="640,640 663,620 690,600 700,615 690,650 682,690 672,705 650,712 600,732 560,738 530,728 558,699 593,678"/>
<polygon fill="#8a1adb" filter="url(#fH)" points="520,405 500,388 478,394 463,421 457,438 450,460 436,479 422,499 415,522 408,545 450,540 500,528 560,512 620,540 590,500 560,450"/>
<g transform="rotate(-16 500 600)" filter="url(#fT)"><g transform="rotate(16 500 600)"><polygon fill="#8a1adb" filter="url(#fRough2)" points="408,545 405,552 417,569 398,587 383,609 377,613 375,632 393,646 409,657 430,688 444,697 458,692 482,704 500,730 523,716 558,699 593,678 630,653 663,620 698,590 680,577 650,560 620,540 560,512 500,528 450,540"/></g></g>
<polygon fill="#7a1bcc" filter="url(#fS)" points="408,545 405,552 417,569 398,587 383,609 377,613 375,632 393,646 409,657 430,688 444,697 458,692 482,704 500,730 523,716 558,699 593,678 630,653 663,620 698,590 680,577 650,560 620,540 560,512 500,528 450,540"/>
<polygon fill="#8a1adb" filter="url(#fRough)" points="630,272 646,260 662,253 680,250 694,249 710,262 730,275 750,287 772,299 790,300 805,310 820,325 835,345 848,368 852,385 850,405 852,420 847,435 849,452 861,467 844,482 824,501 812,513 790,513 773,514 761,521 744,543 730,560 717,584 698,590 680,577 650,560 620,540 590,500 560,450 520,405 505,395 500,374 519,358 543,345 562,329 582,313 606,291 624,277"/>
<g filter="url(#fBlur)"><polygon fill="#3f0c78" opacity="0.75" points="770,298 800,312 830,350 850,400 846,430 820,400 795,350 765,312"/><polygon fill="#5a12a0" opacity="0.5" points="700,260 780,300 800,340 760,310 705,275"/><polygon fill="#5a12a0" opacity="0.35" points="560,360 640,330 740,300 740,315 650,345 570,375"/><polygon fill="#9c2cf2" opacity="0.3" points="600,320 690,285 740,300 650,335"/><polygon fill="#9c2cf2" opacity="0.25" points="650,440 760,420 830,440 800,490 700,520 640,500"/><polygon fill="#5a12a0" opacity="0.35" points="560,420 620,400 700,400 640,430 590,470"/><polygon fill="#5a12a0" opacity="0.4" points="700,540 760,500 820,470 850,470 800,510 740,550"/></g>
<polygon fill="#5d15a6" points="883,452 893,440 887,458 860,480 835,500 812,514 790,520 778,511 800,497 830,478 860,462"/>
<polygon fill="#8a1adb" points="859,388 862,370 870,352 880,338 890,332 900,336 904,345 900,358 890,372 881,384 871,396"/>
<ellipse cx="894" cy="343" rx="7" ry="8" fill="#3a2cf0" opacity=".8" filter="url(#fBlur2)"/>
<polygon fill="#5d15a6" points="871,396 878,393 898,384 927,377 942,370 937,377 910,389 898,398 883,404"/>
<polygon fill="#8a1adb" filter="url(#fH)" points="903,403 896,423 891,443 883,457 861,467 849,452 856,445 871,430 881,420 893,411"/>
<g filter="url(#fRough2)"><polygon fill="url(#bgg)" points="502,571 529,552 578,542 627,537 656,547 617,557 553,571 529,581 504,576"/><polygon fill="url(#bgg)" points="529,527 583,515 617,513 612,522 573,530 539,537"/><polygon fill="url(#bgg)" points="529,589 578,581 637,567 661,559 656,571 607,584 561,596 529,598"/><polygon fill="url(#bgg)" points="566,473 602,461 602,466 568,478"/><polygon fill="url(#bgg)" points="578,486 607,478 607,483 580,491"/><polygon fill="url(#bgg)" points="611,357 636,352 640,362 620,372"/><polygon fill="url(#bgg)" points="824,270 869,260 883,272 881,297 881,322 873,350 862,368 856,340 858,300 849,278"/><polygon fill="url(#bgg)" points="871,401 893,411 881,420 871,430 856,445 849,452 847,435 852,420"/></g>
<g filter="url(#fBlur1)">
<polyline fill="none" stroke="#3c0d6e" stroke-width="3.52" stroke-linejoin="round" opacity=".8" points="625,301 660,290 700,276 735,262"/>
<polyline fill="none" stroke="#3c0d6e" stroke-width="3.52" stroke-linejoin="round" opacity=".8" points="640,323 670,312 700,300 730,290 770,304"/>
<polyline fill="none" stroke="#4a1088" stroke-width="3.08" stroke-linejoin="round" opacity=".8" points="737,197 770,205 800,212 840,221"/>
<polyline fill="none" stroke="#2a0a50" stroke-width="3.52" stroke-linejoin="round" opacity=".8" points="712,318 740,310 760,306"/>
<polyline fill="none" stroke="#1c0638" stroke-width="4.4" stroke-linejoin="round" opacity=".8" points="883,455 850,472 815,492 778,511 760,535 749,555 717,584 680,609 640,640 600,670 560,698 523,716 500,730"/>
<polyline fill="none" stroke="#3c0d6e" stroke-width="3.08" stroke-linejoin="round" opacity=".8" points="780,300 800,325 825,365 845,400 850,420"/>
<polyline fill="none" stroke="#3c0d6e" stroke-width="2.64" stroke-linejoin="round" opacity=".8" points="700,405 740,410 790,412 840,420"/>
<polyline fill="none" stroke="#3c0d6e" stroke-width="2.64" stroke-linejoin="round" opacity=".8" points="540,355 565,345 585,352 600,368"/>
</g>
<polyline fill="none" stroke="#0c0418" stroke-width="1.5" points="883,455 850,472 815,492 778,511 760,535 749,555 717,584 680,609 640,640 600,670 560,698 523,716 500,730"/>
<g filter="url(#fRough2)"><polygon fill="url(#bgg)" opacity=".9" points="413,594 421.603,597.245 466.443,584.325 472,577 463.397,573.755 418.557,586.675"/><polygon fill="url(#bgg)" opacity=".9" points="446,674 457.378,678.272 515.138,660.032 522,650 510.622,645.728 452.862,663.968"/><polygon fill="url(#bgg)" opacity=".9" points="463,630 476.715,631.333 554.995,609.293 566,601 552.285,599.667 474.005,621.707"/><polygon fill="url(#bgg)" opacity=".9" points="538,654 552.541,654.423 634.621,627.063 646,618 631.459,617.577 549.379,644.937"/><polygon fill="url(#bgg)" opacity=".9" points="440,530 446.223,532.261 478.143,522.381 482,517 475.777,514.739 443.857,524.619"/><polygon fill="url(#bgg)" opacity=".9" points="425,640 431.44,641.662 465.64,631.022 470,626 463.56,624.338 429.36,634.978"/><polygon fill="url(#bgg)" opacity=".9" points="500,700 509.697,700.904 562.897,682.664 570,676 560.303,675.096 507.103,693.336"/><polygon fill="url(#bgg)" opacity=".9" points="470,565 476.755,566.343 514.755,556.463 520,552 513.245,550.657 475.245,560.537"/></g>
<g filter="url(#fRough2)"><polygon fill="url(#bgg)" opacity=".8" points="640,353 649.583,354.65 708.863,349.33 718,346 708.417,344.35 649.137,349.67"/><polygon fill="url(#bgg)" opacity=".8" points="598,374 608.363,374.54 672.203,365.42 682,362 671.637,361.46 607.797,370.58"/><polygon fill="url(#bgg)" opacity=".8" points="686,377 690.371,378.379 716.211,374.579 720,372 715.629,370.621 689.789,374.421"/><polygon fill="url(#bgg)" opacity=".8" points="560,398 566.294,398.271 604.294,390.671 610,388 603.706,387.729 565.706,395.329"/><polygon fill="url(#bgg)" opacity=".8" points="655,335 660.598,335.767 694.798,331.207 700,329 694.402,328.233 660.202,332.793"/></g>
<polygon fill="url(#bgg)" filter="url(#fL)" points="600,352 650,347 700,350 716,360 700,384 650,388 610,392 590,380"/>
<polygon fill="url(#bgg)" filter="url(#fL)" points="622,345 660,338 700,330 760,338 800,352 790,372 740,368 690,372 650,385 600,410 570,425 555,410 585,372"/>
<polygon fill="url(#bgg)" filter="url(#fF)" points="560,340 640,315 720,305 800,330 830,380 800,400 740,400 690,420 660,470 640,540 600,500 540,420 520,390"/>
<g filter="url(#fBlur2)"><ellipse cx="782" cy="296" rx="10" ry="4" fill="#2a22ee" opacity=".75" transform="rotate(-20 782 296)"/><ellipse cx="800" cy="312" rx="8" ry="5" fill="#2a22ee" opacity=".75" transform="rotate(-20 800 312)"/><ellipse cx="822" cy="345" rx="9" ry="6" fill="#2a22ee" opacity=".75" transform="rotate(-20 822 345)"/><ellipse cx="845" cy="385" rx="6" ry="8" fill="#2a22ee" opacity=".75" transform="rotate(-20 845 385)"/><ellipse cx="652" cy="253" rx="5" ry="3" fill="#2a22ee" opacity=".75" transform="rotate(-20 652 253)"/><ellipse cx="770" cy="492" rx="9" ry="4" fill="#2a22ee" opacity=".75" transform="rotate(-20 770 492)"/><ellipse cx="792" cy="458" rx="8" ry="4" fill="#2a22ee" opacity=".75" transform="rotate(-20 792 458)"/><ellipse cx="515" cy="565" rx="14" ry="3" fill="#2a22ee" opacity=".75" transform="rotate(-20 515 565)"/><ellipse cx="585" cy="548" rx="10" ry="2.5" fill="#2a22ee" opacity=".75" transform="rotate(-20 585 548)"/><ellipse cx="560" cy="480" rx="8" ry="2.5" fill="#2a22ee" opacity=".75" transform="rotate(-20 560 480)"/><ellipse cx="640" cy="607" rx="8" ry="3" fill="#2a22ee" opacity=".75" transform="rotate(-20 640 607)"/></g>
<polyline fill="none" stroke="#0a0a14" stroke-width="2.5" points="878,397 898,388 927,379 940,372"/>
<polyline fill="none" stroke="#19d9ee" stroke-width="2" points="882,394 890,390"/><polyline fill="none" stroke="#19d9ee" stroke-width="1.5" points="900,398 903,390"/>
<polyline fill="none" stroke="#d8f020" stroke-width="2.2" points="905,384 916,378"/><polyline fill="none" stroke="#40e040" stroke-width="2" points="916,378 924,372"/>
<polyline fill="none" stroke="#1a58f0" stroke-width="8" stroke-linejoin="round" filter="url(#fL)" points="356,611 371,626 383,641 396,654 409,666 423,683 437,697 448,711 469,720"/>
<g filter="url(#fRough2)"><polyline fill="none" stroke="#18c8e8" stroke-width="7" stroke-linejoin="round" stroke-dasharray="14 8 6 12 20 9" filter="url(#fL)" points="352,616 367,631 379,646 392,659 405,671 419,688 433,702 444,716 465,725 475,732 497,731 512,732 532,739 548,745 572,741 600,734 628,724 653,711 664,706"/></g>
<g filter="url(#fRough2)"><polyline fill="none" stroke="#3be02a" stroke-width="6" stroke-linejoin="round" stroke-dasharray="9 9 16 8 5 12" filter="url(#fL)" points="348,622 363,637 375,652 388,665 401,677 415,694 429,708 440,722 461,731 471,738 493,737 508,738 528,745 544,751 568,747 596,740"/></g>
<polygon fill="#3be02a" filter="url(#fS)" points="514,732 532,730 548,738 546,749 520,746"/>
<polygon fill="#18c8e8" filter="url(#fS)" points="338,618 352,618 356,630 344,632"/>
<polyline fill="none" stroke="#21e04a" stroke-width="2" points="546,748 570,743 598,736 626,726"/>
<polyline fill="none" stroke="#18c8e8" stroke-width="1.6" points="626,726 651,713 662,708"/>
<rect x="322" y="614" width="2" height="1.5" fill="#e01010"/>
<rect x="325" y="617" width="2" height="1.5" fill="#f0c010"/>
<rect x="327" y="620" width="2" height="1.5" fill="#f0c010"/>
<rect x="318" y="637" width="2" height="1.5" fill="#c8e020"/>
<rect x="330" y="632" width="2" height="1.5" fill="#40e040"/>
<rect x="333" y="640" width="2" height="1.5" fill="#40e040"/>
<rect x="340" y="645" width="2" height="1.5" fill="#18c8e8"/>
<rect x="407" y="497" width="2" height="1.5" fill="#18c8e8"/>
<rect x="405" y="494" width="2" height="1.5" fill="#2a22ee"/>
<rect x="394" y="548" width="2" height="1.5" fill="#18c8e8"/>
<rect x="396" y="552" width="2" height="1.5" fill="#20d0a0"/>
<rect x="797" y="562" width="2" height="1.5" fill="#18c8e8"/>
<rect x="788" y="578" width="2" height="1.5" fill="#18c8e8"/>
<rect x="765" y="598" width="2" height="1.5" fill="#18c8e8"/>
<rect x="742" y="626" width="2" height="1.5" fill="#18c8e8"/>
<rect x="905" y="186" width="2" height="1.5" fill="#18c8e8"/>
<rect x="921" y="200" width="2" height="1.5" fill="#18c8e8"/>
<rect x="933" y="214" width="2" height="1.5" fill="#18c8e8"/>
<g stroke-linecap="butt" fill="none"><path d="M337.5 748L334 721" stroke="#1018f0" stroke-width="1.6"/><path d="M327 720.5h14M333 718h8" stroke="#1018f0" stroke-width="2"/><path d="M337.5 748L356 732" stroke="#20d820" stroke-width="1.6"/><path d="M353 731l4 3M356 732l6-2" stroke="#20d820" stroke-width="1.4"/><path d="M337.5 748.5L374 749.5" stroke="#f01010" stroke-width="1.8"/><path d="M360 750l4 2l3-3l3 3M368 748v5" stroke="#f01010" stroke-width="1.4"/></g>
<!--/CLOUD-->
</svg>
</div>
<div class="abs" style="left:1014px;top:146px;width:43px;height:554px;background:#ff0"></div>
<div class="abs" style="left:1017px;top:149px;width:37px;height:548px;background:linear-gradient(#ff0000 0%,#ff8000 16.7%,#ffff00 33.3%,#00ff00 50%,#00ffff 66.7%,#0000ff 83.3%,#a020f0 100%)"></div>
<div class="abs" style="left:1006px;top:125px;width:62px;color:#ff0;font-family:'Liberation Mono','Noto Sans CJK SC',monospace;font-size:12px;line-height:14px;white-space:nowrap">点到点距离</div>
<div class="tk" style="top:146px"></div><div class="cl" style="top:146px">35.101</div>
<div class="tk" style="top:180px"></div><div class="cl" style="top:175.5px">32.908</div>
<div class="tk" style="top:215px"></div><div class="cl" style="top:210.5px">30.714</div>
<div class="tk" style="top:249px"></div><div class="cl" style="top:244.5px">28.520</div>
<div class="tk" style="top:284px"></div><div class="cl" style="top:279.5px">26.326</div>
<div class="tk" style="top:318px"></div><div class="cl" style="top:313.5px">24.132</div>
<div class="tk" style="top:353px"></div><div class="cl" style="top:348.5px">21.938</div>
<div class="tk" style="top:387px"></div><div class="cl" style="top:382.5px">19.745</div>
<div class="tk" style="top:422px"></div><div class="cl" style="top:417.5px">17.551</div>
<div class="tk" style="top:456px"></div><div class="cl" style="top:451.5px">15.357</div>
<div class="tk" style="top:490px"></div><div class="cl" style="top:485.5px">13.163</div>
<div class="tk" style="top:525px"></div><div class="cl" style="top:520.5px">10.969</div>
<div class="tk" style="top:559px"></div><div class="cl" style="top:554.5px">8.775</div>
<div class="tk" style="top:594px"></div><div class="cl" style="top:589.5px">6.582</div>
<div class="tk" style="top:628px"></div><div class="cl" style="top:623.5px">4.388</div>
<div class="tk" style="top:663px"></div><div class="cl" style="top:658.5px">2.194</div>
<div class="tk" style="top:697px"></div><div class="cl" style="top:687px">0.000</div>

<div class="dtitle" style="left:1080px;top:88px;width:256px">属性</div>
<div class="box" style="left:1080px;top:109px;width:256px;height:299px"></div>
<div id="props" class="abs" style="left:1081px;top:110px;width:254px;height:297px">
<div class="abs" style="left:0;top:1px;width:250px;height:23px;background:linear-gradient(#ffffff 0,#ffffff 45%,#f1f2f4 50%,#f7f8fa 100%);border-bottom:1px solid #d5d5d5"></div>
<div class="abs" style="left:124px;top:1px;width:1px;height:23px;background:#e0e3e8"></div>
<div class="abs" style="left:250px;top:1px;width:1px;height:23px;background:#e0e3e8"></div>
<div class="abs" style="left:0;top:4px;width:124px;text-align:center;font-size:12px;line-height:17px">属性</div>
<div class="abs" style="left:125px;top:4px;width:125px;text-align:center;font-size:12px;line-height:17px">值</div>
<div class="abs" style="left:124px;top:25px;width:1px;height:150px;background:#dcdcdc"></div>
<div class="abs" style="left:250px;top:25px;width:1px;height:150px;background:#dcdcdc"></div>
<div class="prow" style="top:25px"><span style="left:3px">名字</span><span style="left:128px">杨崖2期地面点</span></div>
<div class="prow" style="top:55px"><span style="left:3px">点数</span><span style="left:128px">857994</span></div>
<div class="prow" style="top:85px"><span style="left:3px">顶点颜色</span></div>
<div class="abs" style="left:125px;top:115px;width:125px;height:29px;border:1px solid #c9d3e2;border-width:1px 0 1px 1px"></div><div class="prow" style="top:115px"><span style="left:3px">点大小</span><span style="left:129px">1</span></div>
<div class="prow" style="top:145px"><span style="left:3px">显示</span><span style="left:128px">Site1</span></div>
<div class="abs" style="left:126px;top:86px;width:122px;height:27px;border:1px solid #707070;border-radius:3px;background:linear-gradient(#f2f2f2 0,#ebebeb 48%,#dddddd 52%,#cfcfcf 100%);box-shadow:inset 0 0 0 1px #fcfcfc;text-align:center;font-size:12px;line-height:26px">设置颜色</div>
<div class="abs" style="left:229px;top:117px;width:18px;height:12px;border:1px solid #b5b5b5;background:linear-gradient(#f6f6f6,#dedede)"><div class="abs" style="left:5px;top:3px;border-left:3px solid transparent;border-right:3px solid transparent;border-bottom:3px solid #5066c4"></div></div>
<div class="abs" style="left:229px;top:129px;width:18px;height:12px;border:1px solid #b5b5b5;background:linear-gradient(#f6f6f6,#dedede)"><div class="abs" style="left:5px;top:3px;border-left:3px solid transparent;border-right:3px solid transparent;border-top:3px solid #5066c4"></div></div>
</div>
<div class="dtitle" style="left:1080px;top:414px;width:256px">控制台</div>
<div class="box" style="left:1080px;top:434px;width:256px;height:324px;border-color:#d5dfe8 #d5dfe8 #d5dfe8 #d5dfe8"></div>
<div class="abs" style="left:1085px;top:442px;font-family:'Liberation Mono','Noto Serif CJK SC',monospace;font-size:12px;line-height:14px;white-space:pre"><span class="m">[</span>粗值计算<span class="m">]</span>时间<span class="m">: 0.498 </span>秒
计算完成<span class="m">!</span></div>
<div class="abs" style="left:1109px;top:758px;width:227px;height:20px;background:#fff"></div>
<div class="abs" style="left:1100px;top:766px;border-left:4px solid transparent;border-right:4px solid transparent;border-top:4px solid #111"></div>
<div class="abs" style="left:1109px;top:762px;font-size:12px;line-height:16px;color:#a9a9a9;font-family:'Liberation Mono','Noto Serif CJK SC',monospace">输入命令</div>

<div class="abs" style="left:663px;top:781px;width:615px;height:25px;border:1px solid #b2b2b2;border-radius:3px;background:linear-gradient(#e9e9e9 0,#dcdcdc 15%,#cacaca 50%,#c4c4c4 85%,#cfcfcf 100%);box-shadow:inset 0 0 0 1px #ececec"></div>
<div class="abs" style="left:1317px;top:782px;width:1px;height:24px;background:#d4d4d4"></div>

<!--GRIP--><div class="abs" style="left:1326px;top:802px;width:2px;height:2px;background:#a9a9a9;box-shadow:-1px -1px 0 #fff"></div><div class="abs" style="left:1329px;top:799px;width:2px;height:2px;background:#a9a9a9;box-shadow:-1px -1px 0 #fff"></div><div class="abs" style="left:1329px;top:802px;width:2px;height:2px;background:#a9a9a9;box-shadow:-1px -1px 0 #fff"></div><div class="abs" style="left:1332px;top:796px;width:2px;height:2px;background:#a9a9a9;box-shadow:-1px -1px 0 #fff"></div><div class="abs" style="left:1332px;top:799px;width:2px;height:2px;background:#a9a9a9;box-shadow:-1px -1px 0 #fff"></div><div class="abs" style="left:1332px;top:802px;width:2px;height:2px;background:#a9a9a9;box-shadow:-1px -1px 0 #fff"></div><!--/GRIP--><!--CHROME--><svg class="abs" style="left:8px;top:7px" width="16" height="16" viewBox="0 0 16 16"><defs><linearGradient id="ai" x1="0" y1="0" x2="0" y2="1"><stop offset="0" stop-color="#49a8d6"/><stop offset="1" stop-color="#1c5fa6"/></linearGradient></defs><g fill="none" stroke="url(#ai)" stroke-linecap="butt"><path d="M1 15.5C1 5 4.5 1.2 8 1.2S15 5 15 15.5" stroke-width="1.8"/><path d="M2 11C3.5 6 6 4.2 8 4.2S12.5 6 14 11" stroke-width="1.7"/><path d="M2.5 13.5C4 9 6 7.3 8 7.3S12 9 13.5 13.5" stroke-width="1.7"/><path d="M3.3 15C4.5 11.5 6 10.3 8 10.3S11.5 11.5 12.7 15" stroke-width="1.5"/></g><ellipse cx="8" cy="13.3" rx="3.8" ry="1.9" fill="#4aa82e"/></svg><svg class="abs" style="left:8px;top:33px" width="16" height="16" viewBox="0 0 16 16"><defs><linearGradient id="ai" x1="0" y1="0" x2="0" y2="1"><stop offset="0" stop-color="#49a8d6"/><stop offset="1" stop-color="#1c5fa6"/></linearGradient></defs><g fill="none" stroke="url(#ai)" stroke-linecap="butt"><path d="M1 15.5C1 5 4.5 1.2 8 1.2S15 5 15 15.5" stroke-width="1.8"/><path d="M2 11C3.5 6 6 4.2 8 4.2S12.5 6 14 11" stroke-width="1.7"/><path d="M2.5 13.5C4 9 6 7.3 8 7.3S12 9 13.5 13.5" stroke-width="1.7"/><path d="M3.3 15C4.5 11.5 6 10.3 8 10.3S11.5 11.5 12.7 15" stroke-width="1.5"/></g><ellipse cx="8" cy="13.3" rx="3.8" ry="1.9" fill="#4aa82e"/></svg><div class="abs" style="left:1234px;top:1px;width:103px;height:20px;border:1px solid #3e4238;border-top:none;border-radius:0 0 5px 5px;overflow:hidden;box-shadow:0 0 0 1px rgba(255,255,255,.55)">
<div class="abs" style="left:0;top:0;width:27px;height:20px;background:linear-gradient(#eef1e8 0,#dfe4d6 45%,#b9c0ad 50%,#c6ccba 100%);border-right:1px solid #4a4e44;box-shadow:inset 0 0 0 1px rgba(255,255,255,.6)"></div>
<div class="abs" style="left:28px;top:0;width:26px;height:20px;background:linear-gradient(#eef1e8 0,#dfe4d6 45%,#b9c0ad 50%,#c6ccba 100%);border-right:1px solid #4a4e44;box-shadow:inset 0 0 0 1px rgba(255,255,255,.6)"></div>
<div class="abs" style="left:55px;top:0;width:47px;height:20px;background:linear-gradient(#f0b2a2 0,#e58e7a 45%,#d2452a 50%,#c9492f 80%,#dc7a5e 100%);box-shadow:inset 0 0 0 1px rgba(255,255,255,.45)"></div>
<svg class="abs" style="left:0;top:-1px" width="102" height="20" viewBox="1235 0 102 20">
<rect x="1243.5" y="10.5" width="11" height="4" rx="1" fill="#fff" stroke="#3d4560" stroke-width="1"/>
<path d="M1270.5 5.5h11v9h-11zM1273.5 8.5v3h5v-3z" fill="#fff" fill-rule="evenodd" stroke="#3d4560" stroke-width="1"/>
<path d="M1307.5 5.5h3.8l2.2 2.6l2.2-2.6h3.8l-4 4.5l4 4.5h-3.8l-2.2-2.6l-2.2 2.6h-3.8l4-4.5z" fill="#fff" stroke="#4a3838" stroke-width="1"/>
</svg></div>
<div class="abs" style="left:1282px;top:31px;width:18px;height:18px;background:#dce9f8;border:1px solid #a9b8ce;box-shadow:inset 0 0 0 1px #eef5fc"></div><svg class="abs" style="left:1282px;top:31px" width="18" height="19" viewBox="0 0 18 19"><rect x="5" y="11" width="6" height="2.5" fill="#5a6270"/></svg><div class="abs" style="left:1300px;top:31px;width:18px;height:18px;background:#dce9f8;border:1px solid #a9b8ce;box-shadow:inset 0 0 0 1px #eef5fc"></div><svg class="abs" style="left:1300px;top:31px" width="18" height="19" viewBox="0 0 18 19"><g fill="none" stroke="#5a6270"><path d="M7.5 6v-1h5.5v5h-1.5" stroke-width="1"/><path d="M7 5.5h6" stroke-width="2"/><rect x="5" y="8" width="6" height="5" stroke-width="1"/><path d="M4.5 8.5h7" stroke-width="2"/></g></svg><div class="abs" style="left:1318px;top:31px;width:18px;height:18px;background:#dce9f8;border:1px solid #a9b8ce;box-shadow:inset 0 0 0 1px #eef5fc"></div><svg class="abs" style="left:1318px;top:31px" width="18" height="19" viewBox="0 0 18 19"><path d="M5.5 6l7 7M12.5 6l-7 7" stroke="#5a6270" stroke-width="2"/></svg><svg class="abs" style="left:269px;top:93px" width="26" height="10" viewBox="0 0 26 10"><g fill="none" stroke="#000"><path d="M3 2.5v-1.5h5.5v5h-2" stroke-width="1"/><path d="M3 1.5h5.5" stroke-width="1.6"/><rect x="0.5" y="4" width="5" height="4.5" stroke-width="1"/><path d="M0.5 4.2h5" stroke-width="1.6"/><path d="M17.5 1.5l7 7M24.5 1.5l-7 7" stroke-width="1.6"/></g></svg><svg class="abs" style="left:1306px;top:93px" width="26" height="10" viewBox="0 0 26 10"><g fill="none" stroke="#000"><path d="M3 2.5v-1.5h5.5v5h-2" stroke-width="1"/><path d="M3 1.5h5.5" stroke-width="1.6"/><rect x="0.5" y="4" width="5" height="4.5" stroke-width="1"/><path d="M0.5 4.2h5" stroke-width="1.6"/><path d="M17.5 1.5l7 7M24.5 1.5l-7 7" stroke-width="1.6"/></g></svg><svg class="abs" style="left:1306px;top:419px" width="26" height="10" viewBox="0 0 26 10"><g fill="none" stroke="#000"><path d="M3 2.5v-1.5h5.5v5h-2" stroke-width="1"/><path d="M3 1.5h5.5" stroke-width="1.6"/><rect x="0.5" y="4" width="5" height="4.5" stroke-width="1"/><path d="M0.5 4.2h5" stroke-width="1.6"/><path d="M17.5 1.5l7 7M24.5 1.5l-7 7" stroke-width="1.6"/></g></svg><!--/CHROME-->
</body>
</html>
